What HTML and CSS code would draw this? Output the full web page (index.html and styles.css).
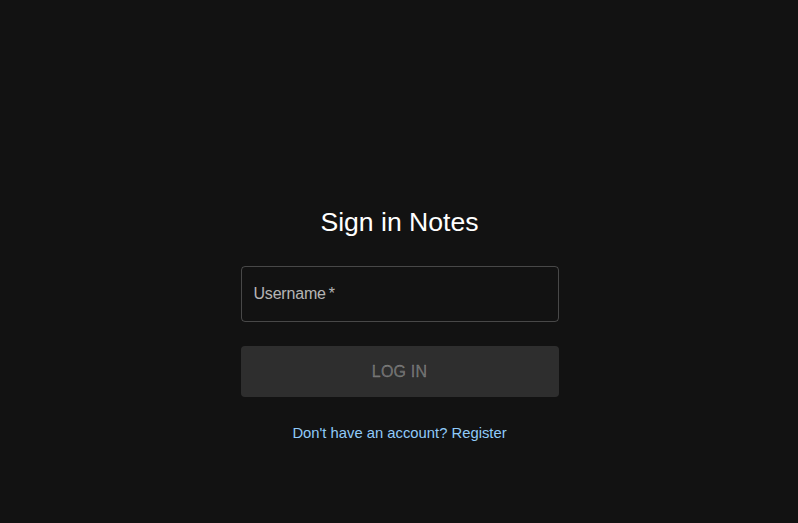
FILE: index.html
```html
<!DOCTYPE html>
<html lang="en">
<head>
<meta charset="utf-8">
<title>Sign in Notes</title>
<link rel="stylesheet" href="styles.css">
</head>
<body>
<main class="page">
  <form class="signin">
    <h1 class="title">Sign in Notes</h1>
    <label class="field">
      <span class="field-label">Username&thinsp;*</span>
    </label>
    <button class="btn" type="button" disabled>LOG IN</button>
    <a class="link" href="#">Don't have an account? Register</a>
  </form>
</main>
</body>
</html>
```

FILE: styles.css
```css
html, body {
  margin: 0;
  padding: 0;
  background: #121212;
  height: 100%;
}
body {
  font-family: "Liberation Sans", Arial, sans-serif;
  color: #fff;
}
.page {
  display: flex;
  justify-content: center;
  padding-top: 206px;
}
.signin {
  width: 318px;
  margin-left: 1px;
  display: flex;
  flex-direction: column;
  align-items: stretch;
}
.title {
  margin: 0;
  font-weight: 400;
  font-size: 26.6px;
  line-height: 32px;
  text-align: center;
  color: #fff;
}
.field {
  margin-top: 28px;
  height: 56px;
  box-sizing: border-box;
  border: 1px solid rgba(255,255,255,0.23);
  border-radius: 4px;
  display: flex;
  align-items: center;
  padding: 0 12px;
}
.field-label {
  font-size: 16px;
  letter-spacing: -0.2px;
  color: rgba(255,255,255,0.7);
}
.btn {
  margin-top: 24px;
  height: 51px;
  border: 0;
  border-radius: 4px;
  background: rgba(255,255,255,0.12);
  color: rgba(255,255,255,0.3);
  font-family: "Liberation Sans", Arial, sans-serif;
  font-size: 16px;
  letter-spacing: 0.2px;
  -webkit-text-stroke: 0.3px rgba(255,255,255,0.3);
  padding: 0;
}
.link {
  margin-top: 26px;
  text-align: center;
  font-size: 14.8px;
  line-height: 20px;
  color: #90caf9;
  text-decoration: none;
}
```
